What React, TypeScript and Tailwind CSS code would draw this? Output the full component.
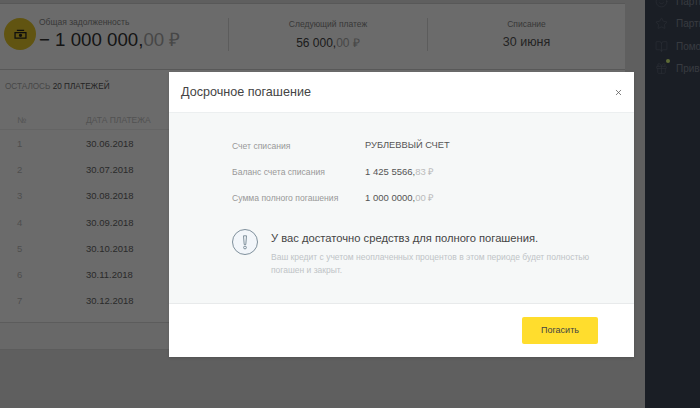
import { Gift, Smile, Star, X, BookOpen } from "lucide-react";

const rows = [
  ["1", "30.06.2018"],
  ["2", "30.07.2018"],
  ["3", "30.08.2018"],
  ["4", "30.09.2018"],
  ["5", "30.10.2018"],
  ["6", "30.11.2018"],
  ["7", "30.12.2018"],
  ["8", "30.01.2019"],
];

function Summary() {
  return (
    <div className="flex h-[67px] items-center border-y border-[#d2d2d2] bg-white pb-[5px]">
      <div className="flex w-[228px] items-center gap-[3px] pl-[4px]">
        <div className="flex h-[32px] w-[32px] shrink-0 items-center justify-center rounded-full bg-[#e6c82a]">
          <svg width="13" height="10" viewBox="0 0 14 11" fill="none" stroke="#222" strokeWidth="1.4">
            <path d="M3 1.5h8M1 4h12v6H1z" />
            <circle cx="7" cy="7" r="1.2" fill="#222" />
          </svg>
        </div>
        <div className="flex flex-col">
          <span className="text-[8.5px] leading-[11px] text-[#888]">Общая задолженность</span>
          <span className="text-[18.7px] leading-[24px] text-[#333]">
            − 1 000 000,<span className="text-[#aaa]">00 ₽</span>
          </span>
        </div>
      </div>
      <div className="flex h-[33px] w-[200px] flex-col items-center justify-center gap-[6px] border-x border-[#dcdcdc]">
        <span className="text-[8.5px] leading-[11px] text-[#888]">Следующий платеж</span>
        <span className="text-[12px] leading-[14px] text-[#444]">
          56 000,<span className="text-[#aaa]">00 ₽</span>
        </span>
      </div>
      <div className="flex h-[33px] flex-1 flex-col items-center justify-center gap-[4px]">
        <span className="text-[8.5px] leading-[11px] text-[#888]">Списание</span>
        <span className="text-[12.5px] leading-[16px] text-[#555]">30 июня</span>
      </div>
    </div>
  );
}

function Schedule() {
  return (
    <div className="flex h-[280px] flex-col bg-white">
      <p className="pl-[5px] pt-[11px] text-[8.2px] leading-[12px] text-[#aaa]">
        ОСТАЛОСЬ <span className="text-[#555]">20 ПЛАТЕЖЕЙ</span>
      </p>
      <div className="mt-[18px] flex h-[19px] shrink-0 items-center border-b border-[#eee] pl-[17px] text-[8.5px] text-[#c4c4c4]">
        <span className="w-[69px]">№</span>
        <span>ДАТА ПЛАТЕЖА</span>
      </div>
      <div className="flex min-h-0 flex-1 flex-col overflow-hidden pt-[1px]">
        {rows.map(([n, date]) => (
          <div key={n} className="flex h-[26.2px] shrink-0 items-center pl-[17px] text-[9.5px]">
            <span className="w-[69px] text-[#bbb]">{n}</span>
            <span className="text-[#666]">{date}</span>
          </div>
        ))}
      </div>
      <div className="h-[28px] shrink-0 border-y border-[#dcdcdc] bg-[#f7f7f7]" />
    </div>
  );
}

function Sidebar() {
  const items = [
    { Icon: Smile, label: "Партнёры" },
    { Icon: Star, label: "Партнёрам" },
    { Icon: BookOpen, label: "Помощь" },
    { Icon: Gift, label: "Привести друга" },
  ];
  return (
    <aside className="-mt-[6px] flex w-[55px] shrink-0 flex-col gap-[8.5px] overflow-hidden bg-[#3e4859] pl-[10px]">
      {items.map(({ Icon, label }) => (
        <div key={label} className="relative flex h-[14px] items-center gap-[8px] whitespace-nowrap">
          <Icon size={13} strokeWidth={1} className="shrink-0 text-[#6c7484]" />
          <span className="text-[10px] text-[#858c9a]">{label}</span>
          {label === "Привести друга" && (
            <span className="absolute left-[11px] top-[-3px] h-[4px] w-[4px] rounded-full bg-[#e0ff80]" />
          )}
        </div>
      ))}
    </aside>
  );
}

function Modal() {
  return (
    <div className="flex h-[285px] w-[465px] flex-col bg-white shadow-sm">
      <div className="flex h-[41px] shrink-0 items-center justify-between border-b border-[#eceff0] pl-[12px] pr-[11px]">
        <span className="text-[12.6px] text-[#444]">Досрочное погашение</span>
        <X size={9} strokeWidth={2} className="text-[#555]" />
      </div>
      <div className="flex h-[191px] shrink-0 flex-col border-b border-[#e8eaeb] bg-[#f6f8f8] pl-[63px] pt-[20px]">
        <div className="flex h-[26px] items-center">
          <span className="w-[133px] text-[8.6px] text-[#999]">Счет списания</span>
          <span className="text-[9.3px] text-[#555]">РУБЛЕВВЫЙ СЧЕТ</span>
        </div>
        <div className="flex h-[26px] items-center">
          <span className="w-[133px] text-[8.6px] text-[#999]">Баланс счета списания</span>
          <span className="text-[9.5px] text-[#555]">
            1 425 5566,<span className="text-[#bbb]">83 ₽</span>
          </span>
        </div>
        <div className="flex h-[26px] items-center">
          <span className="w-[133px] text-[8.6px] text-[#999]">Сумма полного погашения</span>
          <span className="text-[9.5px] text-[#555]">
            1 000 0000,<span className="text-[#bbb]">00 ₽</span>
          </span>
        </div>
        <div className="mt-[19px] flex gap-[13px]">
          <div className="-mt-[1px] flex h-[26px] w-[26px] shrink-0 items-center justify-center rounded-full border border-[#7f909c] bg-[#f2f6fa]">
            <svg width="6" height="15" viewBox="0 0 6 15" fill="none" stroke="#7f909c">
              <path d="M1.5 .8h3L3.8 9.5H2.2z" />
              <circle cx="3" cy="12.5" r="1.4" />
            </svg>
          </div>
          <div className="flex flex-col">
            <span className="text-[11.2px] leading-[16px] text-[#444]">
              У вас достаточно средствз для полного погашения.
            </span>
            <span className="mt-[5px] w-[330px] text-[8.5px] leading-[13px] text-[#c0c4c7]">
              Ваш кредит с учетом неоплаченных процентов в этом периоде будет полностью погашен и закрыт.
            </span>
          </div>
        </div>
      </div>
      <div className="flex flex-1 items-center justify-end pr-[36px]">
        <button className="h-[27px] w-[76px] rounded-[2px] bg-[#ffdd2d] text-[9px] text-[#444]">Погасить</button>
      </div>
    </div>
  );
}

export default function App() {
  return (
    <div className="relative flex h-[408px] w-[700px] overflow-hidden bg-[#e2e2e2] font-['Liberation_Sans',sans-serif]">
      <div className="w-[625px] pt-[3px]">
        <Summary />
        <Schedule />
      </div>
      <div className="w-[20px]" />
      <Sidebar />
      <div className="absolute inset-0 flex items-start bg-black/58 pl-[169px] pt-[72px]">
        <Modal />
      </div>
    </div>
  );
}
